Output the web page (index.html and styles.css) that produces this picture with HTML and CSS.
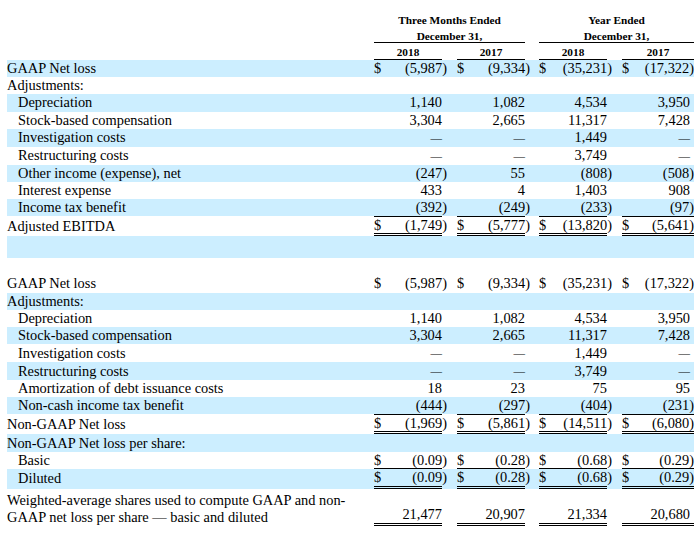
FILE: index.html
```html
<!DOCTYPE html>
<html>
<head>
<meta charset="utf-8">
<link rel="stylesheet" href="styles.css">
</head>
<body>
<table class="fin">
  <colgroup>
    <col class="c-label">
    <col class="c-val">
    <col class="c-gap">
    <col class="c-val">
    <col class="c-gap2">
    <col class="c-val">
    <col class="c-gap">
    <col class="c-last">
  </colgroup>
  <thead>
    <tr class="h1">
      <td></td>
      <td colspan="3">Three Months Ended</td>
      <td></td>
      <td colspan="3">Year Ended</td>
    </tr>
    <tr class="h2">
      <td></td>
      <td colspan="3" class="hu">December 31,</td>
      <td></td>
      <td colspan="3" class="hu">December 31,</td>
    </tr>
    <tr class="h3">
      <td></td>
      <td class="hu">2018</td><td></td>
      <td class="hu">2017</td><td></td>
      <td class="hu">2018</td><td></td>
      <td class="hu">2017</td>
    </tr>
  </thead>
  <tbody>
    <tr class="r b">
      <td class="l">GAAP Net loss</td>
      <td class="v"><span class="d">$</span><span class="n">(5,987<span class="p">)</span></span></td><td></td>
      <td class="v"><span class="d">$</span><span class="n">(9,334<span class="p">)</span></span></td><td></td>
      <td class="v"><span class="d">$</span><span class="n">(35,231<span class="p">)</span></span></td><td></td>
      <td class="v"><span class="d">$</span><span class="n">(17,322<span class="p">)</span></span></td>
    </tr>
    <tr class="r">
      <td class="l">Adjustments:</td>
      <td></td><td></td><td></td><td></td><td></td><td></td><td></td>
    </tr>
    <tr class="r b">
      <td class="l i">Depreciation</td>
      <td class="v"><span class="n">1,140</span></td><td></td>
      <td class="v"><span class="n">1,082</span></td><td></td>
      <td class="v"><span class="n">4,534</span></td><td></td>
      <td class="v"><span class="n">3,950</span></td>
    </tr>
    <tr class="r">
      <td class="l i">Stock-based compensation</td>
      <td class="v"><span class="n">3,304</span></td><td></td>
      <td class="v"><span class="n">2,665</span></td><td></td>
      <td class="v"><span class="n">11,317</span></td><td></td>
      <td class="v"><span class="n">7,428</span></td>
    </tr>
    <tr class="r b">
      <td class="l i">Investigation costs</td>
      <td class="v"><span class="n dash">—</span></td><td></td>
      <td class="v"><span class="n dash">—</span></td><td></td>
      <td class="v"><span class="n">1,449</span></td><td></td>
      <td class="v"><span class="n dash">—</span></td>
    </tr>
    <tr class="r">
      <td class="l i">Restructuring costs</td>
      <td class="v"><span class="n dash">—</span></td><td></td>
      <td class="v"><span class="n dash">—</span></td><td></td>
      <td class="v"><span class="n">3,749</span></td><td></td>
      <td class="v"><span class="n dash">—</span></td>
    </tr>
    <tr class="r b">
      <td class="l i">Other income (expense), net</td>
      <td class="v"><span class="n">(247<span class="p">)</span></span></td><td></td>
      <td class="v"><span class="n">55</span></td><td></td>
      <td class="v"><span class="n">(808<span class="p">)</span></span></td><td></td>
      <td class="v"><span class="n">(508<span class="p">)</span></span></td>
    </tr>
    <tr class="r">
      <td class="l i">Interest expense</td>
      <td class="v"><span class="n">433</span></td><td></td>
      <td class="v"><span class="n">4</span></td><td></td>
      <td class="v"><span class="n">1,403</span></td><td></td>
      <td class="v"><span class="n">908</span></td>
    </tr>
    <tr class="r b">
      <td class="l i">Income tax benefit</td>
      <td class="v"><span class="n">(392<span class="p">)</span></span></td><td></td>
      <td class="v"><span class="n">(249<span class="p">)</span></span></td><td></td>
      <td class="v"><span class="n">(233<span class="p">)</span></span></td><td></td>
      <td class="v"><span class="n">(97<span class="p">)</span></span></td>
    </tr>
    <tr class="r tot">
      <td class="l">Adjusted EBITDA</td>
      <td class="v t dd"><span class="d">$</span><span class="n">(1,749<span class="p">)</span></span></td><td></td>
      <td class="v t dd"><span class="d">$</span><span class="n">(5,777<span class="p">)</span></span></td><td></td>
      <td class="v t dd"><span class="d">$</span><span class="n">(13,820<span class="p">)</span></span></td><td></td>
      <td class="v t dd"><span class="d">$</span><span class="n">(5,641<span class="p">)</span></span></td>
    </tr>
    <tr class="blank1 b">
      <td></td><td></td><td></td><td></td><td></td><td></td><td></td><td></td>
    </tr>
    <tr class="blank2">
      <td></td><td></td><td></td><td></td><td></td><td></td><td></td><td></td>
    </tr>

    <tr class="r">
      <td class="l">GAAP Net loss</td>
      <td class="v"><span class="d">$</span><span class="n">(5,987<span class="p">)</span></span></td><td></td>
      <td class="v"><span class="d">$</span><span class="n">(9,334<span class="p">)</span></span></td><td></td>
      <td class="v"><span class="d">$</span><span class="n">(35,231<span class="p">)</span></span></td><td></td>
      <td class="v"><span class="d">$</span><span class="n">(17,322<span class="p">)</span></span></td>
    </tr>
    <tr class="r b">
      <td class="l">Adjustments:</td>
      <td></td><td></td><td></td><td></td><td></td><td></td><td></td>
    </tr>
    <tr class="r">
      <td class="l i">Depreciation</td>
      <td class="v"><span class="n">1,140</span></td><td></td>
      <td class="v"><span class="n">1,082</span></td><td></td>
      <td class="v"><span class="n">4,534</span></td><td></td>
      <td class="v"><span class="n">3,950</span></td>
    </tr>
    <tr class="r b">
      <td class="l i">Stock-based compensation</td>
      <td class="v"><span class="n">3,304</span></td><td></td>
      <td class="v"><span class="n">2,665</span></td><td></td>
      <td class="v"><span class="n">11,317</span></td><td></td>
      <td class="v"><span class="n">7,428</span></td>
    </tr>
    <tr class="r">
      <td class="l i">Investigation costs</td>
      <td class="v"><span class="n dash">—</span></td><td></td>
      <td class="v"><span class="n dash">—</span></td><td></td>
      <td class="v"><span class="n">1,449</span></td><td></td>
      <td class="v"><span class="n dash">—</span></td>
    </tr>
    <tr class="r b">
      <td class="l i">Restructuring costs</td>
      <td class="v"><span class="n dash">—</span></td><td></td>
      <td class="v"><span class="n dash">—</span></td><td></td>
      <td class="v"><span class="n">3,749</span></td><td></td>
      <td class="v"><span class="n dash">—</span></td>
    </tr>
    <tr class="r">
      <td class="l i">Amortization of debt issuance costs</td>
      <td class="v"><span class="n">18</span></td><td></td>
      <td class="v"><span class="n">23</span></td><td></td>
      <td class="v"><span class="n">75</span></td><td></td>
      <td class="v"><span class="n">95</span></td>
    </tr>
    <tr class="r b">
      <td class="l i">Non-cash income tax benefit</td>
      <td class="v"><span class="n">(444<span class="p">)</span></span></td><td></td>
      <td class="v"><span class="n">(297<span class="p">)</span></span></td><td></td>
      <td class="v"><span class="n">(404<span class="p">)</span></span></td><td></td>
      <td class="v"><span class="n">(231<span class="p">)</span></span></td>
    </tr>
    <tr class="r tot">
      <td class="l">Non-GAAP Net loss</td>
      <td class="v t dd"><span class="d">$</span><span class="n">(1,969<span class="p">)</span></span></td><td></td>
      <td class="v t dd"><span class="d">$</span><span class="n">(5,861<span class="p">)</span></span></td><td></td>
      <td class="v t dd"><span class="d">$</span><span class="n">(14,511<span class="p">)</span></span></td><td></td>
      <td class="v t dd"><span class="d">$</span><span class="n">(6,080<span class="p">)</span></span></td>
    </tr>
    <tr class="r b">
      <td class="l">Non-GAAP Net loss per share:</td>
      <td></td><td></td><td></td><td></td><td></td><td></td><td></td>
    </tr>
    <tr class="r ul">
      <td class="l i">Basic</td>
      <td class="v u"><span class="d">$</span><span class="n">(0.09<span class="p">)</span></span></td><td></td>
      <td class="v u"><span class="d">$</span><span class="n">(0.28<span class="p">)</span></span></td><td></td>
      <td class="v u"><span class="d">$</span><span class="n">(0.68<span class="p">)</span></span></td><td></td>
      <td class="v u"><span class="d">$</span><span class="n">(0.29<span class="p">)</span></span></td>
    </tr>
    <tr class="r b dl">
      <td class="l i">Diluted</td>
      <td class="v dd"><span class="d">$</span><span class="n">(0.09<span class="p">)</span></span></td><td></td>
      <td class="v dd"><span class="d">$</span><span class="n">(0.28<span class="p">)</span></span></td><td></td>
      <td class="v dd"><span class="d">$</span><span class="n">(0.68<span class="p">)</span></span></td><td></td>
      <td class="v dd"><span class="d">$</span><span class="n">(0.29<span class="p">)</span></span></td>
    </tr>
    <tr class="wrow">
      <td class="l">Weighted-average shares used to compute GAAP and non-<br>GAAP net loss per share — basic and diluted</td>
      <td class="v dd bot"><span class="n">21,477</span></td><td></td>
      <td class="v dd bot"><span class="n">20,907</span></td><td></td>
      <td class="v dd bot"><span class="n">21,334</span></td><td></td>
      <td class="v dd bot"><span class="n">20,680</span></td>
    </tr>
  </tbody>
</table>
</body>
</html>
```
FILE: styles.css
```css
html, body {
  margin: 0;
  padding: 0;
  background: #ffffff;
}
body {
  padding: 11px 0 0 7px;
  font-family: "Liberation Serif", "Times New Roman", serif;
  color: #000;
}
.fin {
  border-collapse: separate;
  border-spacing: 0;
  table-layout: fixed;
  width: 687px;
  font-size: 14.4px;
}
.c-label { width: 367px; }
.c-val { width: 68px; }
.c-gap { width: 15px; }
.c-gap2 { width: 14px; }
.c-last { width: 72px; }
.fin td {
  padding: 0;
  white-space: nowrap;
}
thead td {
  font-size: 11.3px;
  font-weight: bold;
  text-align: center;
}
.h1 td { height: 16px; line-height: 14px; vertical-align: bottom; }
.h2 td { height: 15px; line-height: 12px; vertical-align: bottom; }
.h3 td { height: 15px; line-height: 14px; vertical-align: bottom; padding-top: 1px; }
.hu { border-bottom: 1px solid #000; }
.r { height: 17.2px; }
.r td {
  line-height: 17px;
  vertical-align: middle;
}
.r.tot { height: 20px; }
.r.tot td { line-height: 15px; }
.r.ul { height: 17px; }
.r.ul td { line-height: 16px; }
.r.dl { height: 20px; }
.b { background: #cceeff; }
.l { text-align: left; }
.i { padding-left: 11px !important; }
.v {
  text-align: right;
}
.v .d {
  float: left;
}
.n {
  display: inline-block;
}
.p {
  margin-right: -5px;
}
.fin td:last-child .n {
  padding-right: 4px;
}
.fin td:last-child .p {
  margin-right: -4px;
}
.n.dash {
  font-size: 11.5px;
}
.t { border-top: 1px solid #000; }
.dd { border-bottom: 3px double #000; }
.u { border-bottom: 1px solid #000; }
.blank1 td { height: 22px; }
.blank2 td { height: 17px; }
.wrow td {
  line-height: 17px;
  padding-top: 3px;
}
.wrow .l {
  white-space: normal;
  vertical-align: top;
}
.wrow .bot {
  vertical-align: bottom;
  line-height: 18px;
}
```
